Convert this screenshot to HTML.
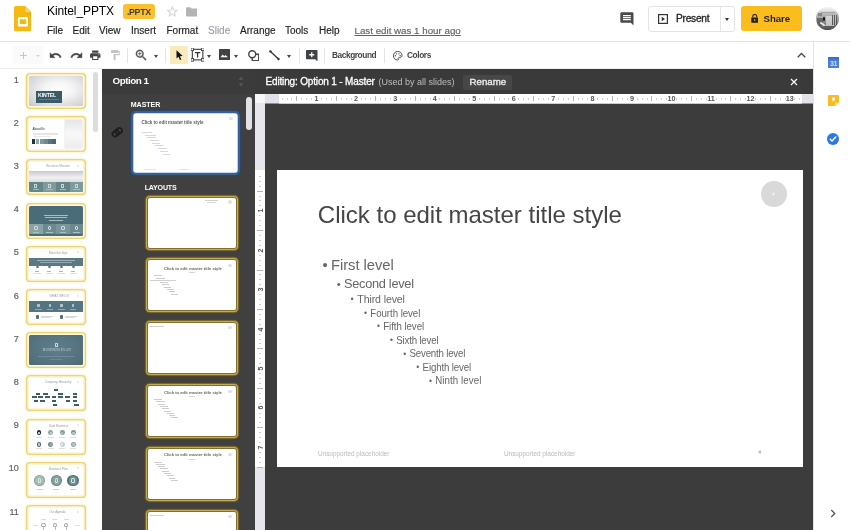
<!DOCTYPE html>
<html>
<head>
<meta charset="utf-8">
<title>Kintel_PPTX - Google Slides</title>
<style>
*{box-sizing:border-box;margin:0;padding:0}
html,body{width:850px;height:530px;overflow:hidden;background:#fff}
body{font-family:"Liberation Sans",sans-serif;position:relative;color:#202124}
.abs{position:absolute}
.t{position:absolute;white-space:nowrap;line-height:1}
.m{-webkit-text-stroke:.3px currentColor}
#menu .t{font-size:10px;top:25.5px;color:#202124;-webkit-text-stroke:.15px currentColor}
#toolbar{position:absolute;left:0;top:41px;width:813.3px;height:28px;border-top:1px solid #e3e3e3;border-bottom:1px solid #efefef;background:#fff}
.sep{position:absolute;top:48px;width:1px;height:15px;background:#e2e3e5}
.dd{position:absolute;width:0;height:0;margin-left:.4px;border-left:2.9px solid transparent;border-right:2.9px solid transparent;border-top:3.1px solid #444}
#film{position:absolute;left:0;top:69px;width:102px;height:461px;background:#fff;overflow:hidden}
.num{position:absolute;width:18.8px;text-align:right;left:0;font-size:9px;color:#5f6368;line-height:1;margin-top:1px;-webkit-text-stroke:.2px #5f6368}
.th{position:absolute;left:29px;width:54px;height:30px;background:#fff;border-radius:1.5px;
 box-shadow:0 0 0 1.7px #fdf6d8,0 0 0 3.1px #e9d37c,0 0 0 4.4px #fdf8e0;overflow:hidden}
.th>*{position:absolute}
#lay{position:absolute;left:102px;top:69px;width:153px;height:461px;background:#404040;overflow:hidden}
#layhead{position:absolute;left:0;top:0;width:153px;height:25px;background:#3b3b3b}
.lth{position:absolute;left:45.5px;width:88.5px;height:50px;background:#fff;border-radius:2px;
 box-shadow:0 0 0 1px #86712c,0 0 0 2px #c4aa50,0 0 0 3px #7a6728,0 0 0 3.5px #564a25;overflow:hidden}
.lth>*,.mth>*{position:absolute}
#main{position:absolute;left:255px;top:69px;width:558.3px;height:461px;background:#3c3c3c;overflow:hidden}
#slide{position:absolute;left:22px;top:101.3px;width:525.5px;height:296.9px;background:#fff}
#side{position:absolute;left:813.3px;top:41px;width:36.5px;height:489px;background:#fff;border-left:1px solid #e3e3e3;border-top:1px solid #e3e3e3}
</style>
</head>
<body>
<div id="root" style="position:absolute;left:0;top:0;width:850px;height:530px;will-change:transform;transform:translateZ(0)">
<!-- ===== TOP BAR ===== -->
<div id="top">
 <svg class="abs" style="left:13.6px;top:6.3px" width="17.8" height="25.3" viewBox="0 0 17.8 25.3">
  <path d="M1.8 0h9.5l6.5 6.5v17a1.8 1.8 0 0 1-1.8 1.8H1.8A1.8 1.8 0 0 1 0 23.5V1.8A1.8 1.8 0 0 1 1.8 0z" fill="#f4b912"/>
  <path d="M11.3 0l6.5 6.5h-4.7a1.8 1.8 0 0 1-1.8-1.8z" fill="#f8d364"/>
  <path d="M11.8 6.3l6 3.6V6.5z" fill="#dda40e" opacity=".45"/>
  <rect x="3.9" y="10.9" width="10.1" height="9.7" rx=".8" fill="#fff"/>
  <rect x="5.7" y="13.3" width="6.6" height="4.7" fill="#f4b912"/>
 </svg>
 <div class="t" style="left:47px;top:4.5px;font-size:12px;color:#000;letter-spacing:-.1px">Kintel_PPTX</div>
 <div class="abs" style="left:123px;top:4.3px;width:31.8px;height:14.6px;border-radius:3px;background:#fbc02d"></div>
 <div class="t" style="left:127px;top:7.6px;font-size:8.8px;font-weight:700;color:#3c3c3c;letter-spacing:-.35px">.PPTX</div>
 <svg class="abs" style="left:166px;top:5px" width="12.6" height="12.6" viewBox="0 0 24 24"><path d="M12 3.5l2.6 6 6.4.6-4.9 4.2 1.5 6.3L12 17.2 6.4 20.6l1.5-6.3L3 10.1l6.4-.6z" fill="none" stroke="#d6d6d6" stroke-width="2"/></svg>
 <svg class="abs" style="left:186px;top:7px" width="11.2" height="9.6" viewBox="0 0 24 20"><path d="M2 0h7l3 3h10a2 2 0 0 1 2 2v13a2 2 0 0 1-2 2H2a2 2 0 0 1-2-2V2a2 2 0 0 1 2-2z" fill="#b4b4b4"/></svg>
 <div id="menu">
  <div class="t" style="left:47px">File</div>
  <div class="t" style="left:72.5px">Edit</div>
  <div class="t" style="left:99px">View</div>
  <div class="t" style="left:131px">Insert</div>
  <div class="t" style="left:166.5px">Format</div>
  <div class="t" style="left:208px;color:#9aa0a6">Slide</div>
  <div class="t" style="left:240px">Arrange</div>
  <div class="t" style="left:285px">Tools</div>
  <div class="t" style="left:319px">Help</div>
  <div class="t" style="left:354.5px;color:#5f6368;font-size:9.75px;text-decoration:underline;text-underline-offset:1px">Last edit was 1 hour ago</div>
 </div>
 <!-- comment icon -->
 <svg class="abs" style="left:618.9px;top:10.5px" width="15.8" height="15.8" viewBox="0 0 24 24"><path d="M21.99 4c0-1.1-.89-2-1.99-2H4c-1.1 0-2 .9-2 2v12c0 1.1.9 2 2 2h14l4 4-.010-18zM18 14H6v-2h12v2zm0-3H6V9h12v2zm0-3H6V6h12v2z" fill="#4a4a4a"/></svg>
 <!-- present -->
 <div class="abs" style="left:648px;top:6px;width:87px;height:25.5px;border:1px solid #e2e3e5;border-radius:3px;background:#fff"></div>
 <div class="abs" style="left:720px;top:6.5px;width:1px;height:24.5px;background:#e6e6e6"></div>
 <svg class="abs" style="left:657.5px;top:13.8px" width="10" height="10" viewBox="0 0 20 20"><rect x="1.2" y="1.2" width="17.6" height="17.6" fill="none" stroke="#333" stroke-width="2.4"/><path d="M7.5 5.5l6.5 4.5-6.5 4.5z" fill="#333"/></svg>
 <div class="t" style="left:676px;top:13.8px;font-size:10.2px;color:#202124;-webkit-text-stroke:.3px #202124;letter-spacing:-.25px">Present</div>
 <div class="dd" style="left:724.5px;top:17.5px;border-top-color:#333"></div>
 <!-- share -->
 <div class="abs" style="left:741px;top:6.3px;width:61px;height:25px;border-radius:3px;background:#fbbc1e"></div>
 <svg class="abs" style="left:750.5px;top:13.5px" width="7.5" height="9" viewBox="0 0 15 18"><path d="M3.5 7V5a4 4 0 0 1 8 0v2" fill="none" stroke="#222" stroke-width="2.2"/><rect x="0.5" y="7" width="14" height="10.5" rx="1.5" fill="#222"/><circle cx="7.5" cy="12.2" r="1.6" fill="#fbbc1e"/></svg>
 <div class="t" style="left:763.5px;top:14px;font-size:9.6px;font-weight:700;color:#222">Share</div>
 <!-- avatar -->
 <div class="abs" style="left:815.5px;top:7.3px;width:23px;height:23px;border-radius:50%;overflow:hidden;background:linear-gradient(180deg,#f4f4f4 0,#e2e2e2 16%,#b8b8b8 30%,#a2a2a2 52%,#787878 76%,#4a4a4a 100%)">
   <div class="abs" style="left:2px;top:6px;width:4px;height:3px;background:#8a8a8a"></div>
   <div class="abs" style="left:1px;top:11px;width:6px;height:8px;background:#5a5a5a;opacity:.8"></div>
   <div class="abs" style="left:7.2px;top:9.6px;width:2.8px;height:4.6px;background:#1c1c1c;border-radius:1px"></div>
   <div class="abs" style="left:10.5px;top:8.5px;width:5.5px;height:9px;background:#e0e0e0;opacity:.75"></div>
   <div class="abs" style="left:16.5px;top:7.5px;width:5px;height:10px;background:repeating-linear-gradient(90deg,#4c4c4c 0 1px,#c8c8c8 1px 2.2px);opacity:.85"></div>
   <div class="abs" style="left:5px;top:4.5px;width:14px;height:1.2px;background:#9a9a9a;opacity:.8"></div>
   <div class="abs" style="left:8px;top:17.5px;width:10px;height:3px;background:repeating-linear-gradient(180deg,#d0d0d0 0 .8px,#5a5a5a .8px 1.6px);opacity:.8"></div>
   <div class="abs" style="left:4px;top:16px;width:5px;height:1.5px;background:#e8e8e8;transform:rotate(35deg)"></div>
 </div>
</div>


<!-- ===== TOOLBAR ===== -->
<div id="toolbar"></div>
<div id="tbicons">
 <div class="abs" style="left:13px;top:46px;width:30px;height:18px;background:#fafafa;border-radius:2px"></div>
 <div class="abs" style="left:19.5px;top:54.6px;width:7.5px;height:1.2px;background:#c6c6c6"></div>
 <div class="abs" style="left:22.65px;top:51.5px;width:1.2px;height:7.5px;background:#c6c6c6"></div>
 <div class="dd" style="left:36px;top:54.5px;border-left-width:2px;border-right-width:2px;border-top:2.5px solid #cfcfcf"></div>
 <!-- undo -->
 <svg class="abs" style="left:49px;top:48.6px" width="13" height="13" viewBox="0 0 24 24"><path stroke="#444" stroke-width=".9" d="M12.5 8c-2.65 0-5.05.99-6.9 2.6L2 7v9h9l-3.62-3.62c1.39-1.16 3.16-1.88 5.12-1.88 3.54 0 6.55 2.31 7.6 5.5l2.37-.78C21.08 11.03 17.15 8 12.5 8z" fill="#444"/></svg>
 <!-- redo -->
 <svg class="abs" style="left:69.5px;top:48.6px" width="13" height="13" viewBox="0 0 24 24"><path stroke="#444" stroke-width=".9" d="M18.4 10.6C16.55 8.99 14.15 8 11.5 8c-4.65 0-8.58 3.03-9.96 7.22L3.9 16c1.05-3.19 4.05-5.5 7.6-5.5 1.95 0 3.73.72 5.12 1.88L13 16h9V7l-3.6 3.6z" fill="#444"/></svg>
 <!-- print -->
 <svg class="abs" style="left:88.5px;top:49px" width="12.5" height="12.5" viewBox="0 0 24 24"><path d="M19 8H5c-1.66 0-3 1.34-3 3v6h4v4h12v-4h4v-6c0-1.66-1.34-3-3-3zm-3 11H8v-5h8v5zm3-7c-.55 0-1-.45-1-1s.45-1 1-1 1 .45 1 1-.45 1-1 1zm-1-9H6v4h12V3z" fill="#444"/></svg>
 <!-- paint format (disabled) -->
 <svg class="abs" style="left:108.5px;top:48.7px" width="12.3" height="12.3" viewBox="0 0 24 24"><path d="M18 4V3c0-.55-.45-1-1-1H5c-.55 0-1 .45-1 1v4c0 .55.45 1 1 1h12c.55 0 1-.45 1-1V6h1v4H9v11c0 .55.45 1 1 1h2c.55 0 1-.45 1-1v-9h8V4h-3z" fill="#c4c4c4"/></svg>
 <div class="sep" style="left:127px"></div>
 <!-- zoom -->
 <svg class="abs" style="left:134px;top:48.1px" width="14.5" height="14.5" viewBox="0 0 24 24"><path stroke="#555" stroke-width=".5" d="M15.5 14h-.79l-.28-.27C15.41 12.59 16 11.11 16 9.5 16 5.91 13.09 3 9.5 3S3 5.91 3 9.5 5.91 16 9.5 16c1.61 0 3.09-.59 4.23-1.57l.27.28v.79l5 4.99L20.49 19l-4.99-5zm-6 0C7.01 14 5 11.99 5 9.5S7.01 5 9.5 5 14 7.01 14 9.5 11.99 14 9.5 14zm.5-7H9v2H7v1h2v2h1v-2h2V9h-2V7z" fill="#555"/></svg>
 <div class="dd" style="left:153.5px;top:54.5px"></div>
 <div class="sep" style="left:165px"></div>
 <!-- select -->
 <div class="abs" style="left:170px;top:46.4px;width:17.6px;height:17.8px;background:#fbeabc;border-radius:1px"></div>
 <svg class="abs" style="left:175.5px;top:50.3px" width="7.5" height="10.5" viewBox="0 0 15 21"><path d="M1 0.5l0 16.5 4-3.6 2.9 6.8 2.8-1.2-2.9-6.7 5.7-.3z" fill="#111"/></svg>
 <!-- textbox -->
 <svg class="abs" style="left:191.2px;top:48.4px" width="13.2" height="13.2" viewBox="0 0 25 25"><rect x="2.5" y="2.5" width="20" height="20" fill="none" stroke="#333" stroke-width="2"/><rect x="0" y="0" width="5" height="5" fill="#fff" stroke="#333" stroke-width="1.4"/><rect x="20" y="0" width="5" height="5" fill="#fff" stroke="#333" stroke-width="1.4"/><rect x="0" y="20" width="5" height="5" fill="#fff" stroke="#333" stroke-width="1.4"/><rect x="20" y="20" width="5" height="5" fill="#fff" stroke="#333" stroke-width="1.4"/><path d="M7.5 7.5h10v2.4h-3.8v8h-2.4v-8H7.5z" fill="#333"/></svg>
 <div class="dd" style="left:207px;top:54.5px"></div>
 <!-- image -->
 <svg class="abs" style="left:219.2px;top:49.2px" width="11" height="11" viewBox="0 0 22 22"><rect width="22" height="22" rx="1" fill="#3f4346"/><path d="M3 16.5l4.5-5.5 3 3.6 2.2-2.6 5.3 4.5z" fill="#fff"/></svg>
 <div class="dd" style="left:234px;top:54.5px"></div>
 <!-- shape -->
 <svg class="abs" style="left:247.5px;top:49.5px" width="11.5" height="11.5" viewBox="0 0 23 23"><path d="M14 8.5h7.5v13h-13v-6" fill="none" stroke="#444" stroke-width="2.8"/><circle cx="8.5" cy="8.5" r="7" fill="#fff" stroke="#444" stroke-width="2.8"/></svg>
 <!-- line -->
 <svg class="abs" style="left:268.5px;top:50px" width="11" height="10.5" viewBox="0 0 22 21"><path d="M2.5 2.5L19 18" stroke="#333" stroke-width="2.6"/><circle cx="2.8" cy="2.8" r="2.4" fill="#333"/><circle cx="19" cy="18" r="2.4" fill="#333"/></svg>
 <div class="dd" style="left:286.7px;top:54.5px"></div>
 <div class="sep" style="left:298.5px"></div>
 <!-- add comment -->
 <svg class="abs" style="left:306px;top:49.5px" width="11.5" height="11.5" viewBox="0 0 23 23"><path d="M1.5 0h20a1.5 1.5 0 0 1 1.5 1.5V23l-4.5-4.5h-17A1.5 1.5 0 0 1 0 17V1.5A1.5 1.5 0 0 1 1.5 0z" fill="#3f4346"/><path d="M10.2 4.5h2.6v3.7h3.7v2.6h-3.7v3.7h-2.6v-3.7H6.5V8.2h3.7z" fill="#fff"/></svg>
 <div class="sep" style="left:324px"></div>
 <div class="t" style="left:332px;top:51.2px;font-size:8.3px;font-weight:700;color:#444;letter-spacing:-.42px">Background</div>
 <div class="sep" style="left:383.5px"></div>
 <!-- palette -->
 <svg class="abs" style="left:391.5px;top:49.5px" width="11.5" height="11.5" viewBox="0 0 24 24"><path d="M12 3a9 9 0 0 0 0 18c.83 0 1.5-.67 1.5-1.5 0-.39-.15-.74-.39-1.01-.23-.26-.38-.61-.38-.99 0-.83.67-1.5 1.5-1.5H16c2.76 0 5-2.24 5-5 0-4.42-4.03-8-9-8z" fill="none" stroke="#444" stroke-width="2"/><circle cx="7" cy="12" r="1.4" fill="#444"/><circle cx="9.5" cy="8" r="1.4" fill="#444"/><circle cx="14.5" cy="8" r="1.4" fill="#444"/><circle cx="17" cy="12" r="1.4" fill="#444"/></svg>
 <div class="t" style="left:407px;top:51.2px;font-size:8.3px;font-weight:700;color:#444;letter-spacing:-.4px">Colors</div>
 <!-- collapse caret -->
 <svg class="abs" style="left:796.5px;top:51.5px" width="9" height="6" viewBox="0 0 18 12"><path d="M1.5 10.5L9 3l7.5 7.5" fill="none" stroke="#444" stroke-width="2.6"/></svg>
</div>

<!-- ===== FILMSTRIP ===== -->
<div id="film">
<div class="num" style="top:5.5px">1</div>
<div class="th" style="top:7px"><div style="inset:0;background:radial-gradient(ellipse at 55% 45%,#fff 0,#f4f4f5 35%,#d2d2d6 85%,#c4c4c8 100%)"></div><div style="left:6.5px;top:14.5px;width:26.5px;height:12.5px;background:#3a5a68"></div><div class="t" style="left:9px;top:17px;font-size:5.2px;font-weight:700;color:#fff;letter-spacing:-.1px">KINTEL</div><div style="left:9.5px;top:23px;width:20px;height:.8px;background:#5f7c86"></div></div>
<div class="num" style="top:48.7px">2</div>
<div class="th" style="top:50.2px"><div style="left:36.3px;top:1px;width:17px;height:28px;background:linear-gradient(180deg,#e6e6e8,#f8f8f9 50%,#ececee);box-shadow:0 0 0 .5px #e6e6e6"></div><div class="t" style="left:3.5px;top:9px;font-size:2.8px;font-weight:700;color:#4a5a62">About Us</div><div style="left:3.5px;top:13.6px;width:25px;height:.6px;background:#e4e4e4"></div><div style="left:3.5px;top:15px;width:25px;height:.6px;background:#e6e6e6"></div><div style="left:3.5px;top:16.4px;width:18px;height:.6px;background:#e8e8e8"></div><div style="left:2.8px;top:20.3px;width:3.7px;height:4.2px;background:#24343b"></div><div style="left:6.8px;top:20.3px;width:3.7px;height:4.2px;background:#93aaa9"></div><div style="left:10.9px;top:20.3px;width:3.7px;height:4.2px;background:#7f9a9c"></div><div style="left:14.9px;top:20.3px;width:3.7px;height:4.2px;background:#6d8a90"></div><div style="left:19px;top:20.3px;width:3.7px;height:4.2px;background:#55767f"></div><div style="left:23.1px;top:20.3px;width:3.7px;height:4.2px;background:#486a76"></div></div>
<div class="num" style="top:91.9px">3</div>
<div class="th" style="top:93.4px"><div class="t" style="left:17.5px;top:3px;font-size:3px;color:#9a9a9a">Business Mission</div><div style="left:48px;top:2.5px;width:2px;height:2px;border-radius:50%;background:#e2e2e2"></div><div style="left:0;top:8.5px;width:54px;height:11.5px;background:linear-gradient(180deg,#c9c9cb,#f1f1f2 60%,#dcdcde)"></div><div style="left:0;top:19.5px;width:54px;height:10.5px;background:#668589"></div><div style="left:13.5px;top:19.5px;width:13.5px;height:10.5px;background:#7e9a9c"></div><div style="left:40.5px;top:19.5px;width:13.5px;height:10.5px;background:#7e9a9c"></div><div style="left:5.2px;top:21.5px;width:3px;height:4px;border:.7px solid #c9d6d6"></div><div style="left:3.5px;top:27px;width:6.5px;height:.6px;background:#a9bcbc"></div><div style="left:18.7px;top:21.5px;width:3px;height:4px;border:.7px solid #c9d6d6"></div><div style="left:17px;top:27px;width:6.5px;height:.6px;background:#a9bcbc"></div><div style="left:32.2px;top:21.5px;width:3px;height:4px;border:.7px solid #c9d6d6"></div><div style="left:30.5px;top:27px;width:6.5px;height:.6px;background:#a9bcbc"></div><div style="left:45.7px;top:21.5px;width:3px;height:4px;border:.7px solid #c9d6d6"></div><div style="left:44px;top:27px;width:6.5px;height:.6px;background:#a9bcbc"></div></div>
<div class="num" style="top:135.1px">4</div>
<div class="th" style="top:136.6px"><div style="inset:0;background:#4a6b78"></div><div style="left:15px;top:9px;width:24px;height:1px;background:#a9bcc3"></div><div style="left:16px;top:11.5px;width:22px;height:1px;background:#a9bcc3"></div><div style="left:20px;top:14px;width:14px;height:1px;background:#a9bcc3"></div><div style="left:0;top:18px;width:54px;height:10px;background:#6b8990"></div><div style="left:0;top:18px;width:13.5px;height:10px;background:#89a2a4"></div><div style="left:27px;top:18px;width:13.5px;height:10px;background:#7a969b"></div><div style="left:5px;top:20px;width:3.5px;height:4px;border:.7px solid #cfdbdb;border-radius:1px"></div><div style="left:3.5px;top:26px;width:6.5px;height:.6px;background:#aebfc0"></div><div style="left:18.5px;top:20px;width:3.5px;height:4px;border:.7px solid #cfdbdb;border-radius:1px"></div><div style="left:17px;top:26px;width:6.5px;height:.6px;background:#aebfc0"></div><div style="left:32px;top:20px;width:3.5px;height:4px;border:.7px solid #cfdbdb;border-radius:1px"></div><div style="left:30.5px;top:26px;width:6.5px;height:.6px;background:#aebfc0"></div><div style="left:45.5px;top:20px;width:3.5px;height:4px;border:.7px solid #cfdbdb;border-radius:1px"></div><div style="left:44px;top:26px;width:6.5px;height:.6px;background:#aebfc0"></div></div>
<div class="num" style="top:178.3px">5</div>
<div class="th" style="top:179.8px"><div class="t" style="left:20px;top:3px;font-size:3px;color:#9a9a9a">Meet the Sign</div><div style="left:48px;top:2.5px;width:2px;height:2px;border-radius:50%;background:#e2e2e2"></div><div style="left:0;top:9.5px;width:54px;height:8px;background:#5a7985"></div><div style="left:8px;top:11.5px;width:38px;height:.8px;background:#9fb2b9"></div><div style="left:11px;top:13.5px;width:32px;height:.8px;background:#93a8af"></div><div style="left:6.5px;top:17px;width:3px;height:2.5px;border-radius:50%;background:#5d7b86"></div><div style="left:6px;top:22px;width:4px;height:1.2px;background:#a9b8bd"></div><div style="left:4.5px;top:24.5px;width:7px;height:.6px;background:#dcdfe0"></div><div style="left:18.5px;top:17px;width:3px;height:2.5px;border-radius:50%;background:#5d7b86"></div><div style="left:18px;top:22px;width:4px;height:1.2px;background:#a9b8bd"></div><div style="left:16.5px;top:24.5px;width:7px;height:.6px;background:#dcdfe0"></div><div style="left:30.5px;top:17px;width:3px;height:2.5px;border-radius:50%;background:#5d7b86"></div><div style="left:30px;top:22px;width:4px;height:1.2px;background:#a9b8bd"></div><div style="left:28.5px;top:24.5px;width:7px;height:.6px;background:#dcdfe0"></div><div style="left:42.5px;top:17px;width:3px;height:2.5px;border-radius:50%;background:#5d7b86"></div><div style="left:42px;top:22px;width:4px;height:1.2px;background:#a9b8bd"></div><div style="left:40.5px;top:24.5px;width:7px;height:.6px;background:#dcdfe0"></div></div>
<div class="num" style="top:221.5px">6</div>
<div class="th" style="top:223px"><div class="t" style="left:20.5px;top:3px;font-size:3px;color:#9a9a9a">WHAT WE DO</div><div style="left:48px;top:2.5px;width:2px;height:2px;border-radius:50%;background:#e2e2e2"></div><div style="left:0;top:8.6px;width:54px;height:11.4px;background:#567582"></div><div style="left:8px;top:12px;width:2.5px;height:2.5px;background:#b7c6ca;border-radius:30%"></div><div style="left:6px;top:16.5px;width:6.5px;height:.7px;background:#93a8af"></div><div style="left:19.5px;top:12px;width:2.5px;height:2.5px;background:#b7c6ca;border-radius:30%"></div><div style="left:17.5px;top:16.5px;width:6.5px;height:.7px;background:#93a8af"></div><div style="left:31px;top:12px;width:2.5px;height:2.5px;background:#b7c6ca;border-radius:30%"></div><div style="left:29px;top:16.5px;width:6.5px;height:.7px;background:#93a8af"></div><div style="left:42.5px;top:12px;width:2.5px;height:2.5px;background:#b7c6ca;border-radius:30%"></div><div style="left:40.5px;top:16.5px;width:6.5px;height:.7px;background:#93a8af"></div><div style="left:7px;top:22.5px;width:3px;height:4px;background:#5a6e76;border-radius:1px"></div><div style="left:12px;top:23.5px;width:12px;height:.6px;background:#d6d6d6"></div><div style="left:12px;top:25px;width:10px;height:.6px;background:#dedede"></div><div style="left:31px;top:22.5px;width:3px;height:4px;background:#5a6e76;border-radius:1px"></div><div style="left:36px;top:23.5px;width:12px;height:.6px;background:#d6d6d6"></div><div style="left:36px;top:25px;width:10px;height:.6px;background:#dedede"></div></div>
<div class="num" style="top:264.7px">7</div>
<div class="th" style="top:266.2px"><div style="inset:0;background:radial-gradient(ellipse at 50% 45%,#5f7e89 0,#557480 60%,#4c6a76 100%)"></div><div style="left:25.5px;top:7.5px;width:3px;height:4px;border:.8px solid #cbd7da;border-radius:.5px"></div><div class="t" style="left:13.5px;top:13px;font-size:4.3px;color:#c3d0d4;font-family:'Liberation Serif',serif;letter-spacing:.1px">B<span style="font-size:3.4px">USINESS</span> P<span style="font-size:3.4px">LAN</span></div><div style="left:9px;top:21px;width:36px;height:.6px;background:#6f8c96"></div><div style="left:21px;top:24px;width:12px;height:.6px;background:#6b8791"></div></div>
<div class="num" style="top:307.9px">8</div>
<div class="th" style="top:309.4px"><div class="t" style="left:16px;top:3px;font-size:3px;color:#9a9a9a">Company Hierarchy</div><div style="left:48px;top:2.5px;width:2px;height:2px;border-radius:50%;background:#e2e2e2"></div><div style="left:24.9px;top:10.5px;width:4.6px;height:2.1px;background:#4f7073;box-shadow:inset 0 0 0 .5px #35545a"></div><div style="left:6.6px;top:14.7px;width:4.6px;height:2.1px;background:#4f7073;box-shadow:inset 0 0 0 .5px #35545a"></div><div style="left:14.4px;top:14.7px;width:4.6px;height:2.1px;background:#4f7073;box-shadow:inset 0 0 0 .5px #35545a"></div><div style="left:29.4px;top:14.7px;width:4.6px;height:2.1px;background:#4f7073;box-shadow:inset 0 0 0 .5px #35545a"></div><div style="left:43.5px;top:14.7px;width:4.6px;height:2.1px;background:#4f7073;box-shadow:inset 0 0 0 .5px #35545a"></div><div style="left:3.3px;top:18px;width:4.6px;height:2.1px;background:#4f7073;box-shadow:inset 0 0 0 .5px #35545a"></div><div style="left:9.4px;top:18px;width:4.6px;height:2.1px;background:#4f7073;box-shadow:inset 0 0 0 .5px #35545a"></div><div style="left:16.1px;top:18px;width:4.6px;height:2.1px;background:#4f7073;box-shadow:inset 0 0 0 .5px #35545a"></div><div style="left:22.7px;top:18px;width:4.6px;height:2.1px;background:#4f7073;box-shadow:inset 0 0 0 .5px #35545a"></div><div style="left:29.4px;top:18px;width:4.6px;height:2.1px;background:#4f7073;box-shadow:inset 0 0 0 .5px #35545a"></div><div style="left:36px;top:18px;width:4.6px;height:2.1px;background:#4f7073;box-shadow:inset 0 0 0 .5px #35545a"></div><div style="left:43.5px;top:18px;width:4.6px;height:2.1px;background:#4f7073;box-shadow:inset 0 0 0 .5px #35545a"></div><div style="left:4.5px;top:21.8px;width:4.6px;height:2.1px;background:#4f7073;box-shadow:inset 0 0 0 .5px #35545a"></div><div style="left:11.1px;top:21.8px;width:4.6px;height:2.1px;background:#4f7073;box-shadow:inset 0 0 0 .5px #35545a"></div><div style="left:22.7px;top:21.8px;width:4.6px;height:2.1px;background:#4f7073;box-shadow:inset 0 0 0 .5px #35545a"></div><div style="left:36.8px;top:21.8px;width:4.6px;height:2.1px;background:#4f7073;box-shadow:inset 0 0 0 .5px #35545a"></div><div style="left:43.5px;top:21.8px;width:4.6px;height:2.1px;background:#4f7073;box-shadow:inset 0 0 0 .5px #35545a"></div><div style="left:23.9px;top:25.5px;width:4.6px;height:2.1px;background:#4f7073;box-shadow:inset 0 0 0 .5px #35545a"></div><div style="left:45.1px;top:25.5px;width:4.6px;height:2.1px;background:#4f7073;box-shadow:inset 0 0 0 .5px #35545a"></div></div>
<div class="num" style="top:351.1px">9</div>
<div class="th" style="top:352.6px"><div class="t" style="left:20px;top:3px;font-size:3px;color:#9a9a9a">Kate Business</div><div style="left:48px;top:2.5px;width:2px;height:2px;border-radius:50%;background:#e2e2e2"></div><div style="left:7.7px;top:8.8px;width:4.8px;height:4.8px;border-radius:50%;background:#1f2c33"></div><div style="left:9.3px;top:10.4px;width:1.6px;height:1.6px;border-radius:50%;background:#dfe6e8"></div><div style="left:19.3px;top:8.8px;width:4.8px;height:4.8px;border-radius:50%;background:#93a8a6"></div><div style="left:20.5px;top:10px;width:2.4px;height:2.4px;border-radius:50%;background:#c8d3d1"></div><div style="left:30.9px;top:8.8px;width:4.8px;height:4.8px;border-radius:50%;background:#8aa09f"></div><div style="left:32.1px;top:10px;width:2.4px;height:2.4px;border-radius:50%;background:#b8c6c4"></div><div style="left:42px;top:8.8px;width:4.8px;height:4.8px;border-radius:50%;background:#7b9497"></div><div style="left:43.2px;top:10px;width:2.4px;height:2.4px;border-radius:50%;background:#c3cfce"></div><div style="left:7.7px;top:20.6px;width:4.8px;height:4.8px;border-radius:50%;background:#4d666f"></div><div style="left:8.9px;top:21.8px;width:2.4px;height:2.4px;border-radius:50%;background:#c5d0d2"></div><div style="left:19.3px;top:20.6px;width:4.8px;height:4.8px;border-radius:50%;background:#6f8a8e"></div><div style="left:20.6px;top:21.9px;width:2.2px;height:2.2px;border-radius:50%;background:#9eb1b2"></div><div style="left:30.9px;top:20.6px;width:4.8px;height:4.8px;border-radius:50%;background:#c3cdcc"></div><div style="left:32.1px;top:21.8px;width:2.4px;height:2.4px;border-radius:50%;background:#e6ebea"></div><div style="left:42px;top:20.6px;width:4.8px;height:4.8px;border-radius:50%;background:#869d9f"></div><div style="left:43.2px;top:21.8px;width:2.4px;height:2.4px;border-radius:50%;background:#b7c5c5"></div><div style="left:7.1px;top:15px;width:6px;height:.5px;background:#dedede"></div><div style="left:7.1px;top:26.8px;width:6px;height:.5px;background:#dedede"></div><div style="left:18.7px;top:15px;width:6px;height:.5px;background:#dedede"></div><div style="left:18.7px;top:26.8px;width:6px;height:.5px;background:#dedede"></div><div style="left:30.299999999999997px;top:15px;width:6px;height:.5px;background:#dedede"></div><div style="left:30.299999999999997px;top:26.8px;width:6px;height:.5px;background:#dedede"></div><div style="left:41.4px;top:15px;width:6px;height:.5px;background:#dedede"></div><div style="left:41.4px;top:26.8px;width:6px;height:.5px;background:#dedede"></div></div>
<div class="num" style="top:394.3px">10</div>
<div class="th" style="top:395.8px"><div class="t" style="left:20px;top:3px;font-size:3px;color:#9a9a9a">Business Plan</div><div style="left:48px;top:2.5px;width:2px;height:2px;border-radius:50%;background:#e2e2e2"></div><div style="left:4.9px;top:10.3px;width:11.2px;height:11.2px;border-radius:50%;background:#83a097"></div><div style="left:6.2px;top:11.6px;width:8.6px;height:8.6px;border-radius:50%;background:#a9bdb5"></div><div style="left:21.7px;top:10.3px;width:11.2px;height:11.2px;border-radius:50%;background:#638585"></div><div style="left:23px;top:11.6px;width:8.6px;height:8.6px;border-radius:50%;background:#86a2a0"></div><div style="left:38.4px;top:10.3px;width:11.2px;height:11.2px;border-radius:50%;background:#4f7478"></div><div style="left:39.7px;top:11.6px;width:8.6px;height:8.6px;border-radius:50%;background:#6f9195"></div><div style="left:8.9px;top:13.5px;width:3.2px;height:4.4px;border:.7px solid #d9e3e0;border-radius:45% 45% 30% 30%"></div><div style="left:25.7px;top:13.5px;width:3.2px;height:4.4px;border:.7px solid #d9e3e0;border-radius:45% 45% 30% 30%"></div><div style="left:42.4px;top:13.5px;width:3.2px;height:4.4px;border:.7px solid #d9e3e0;border-radius:45% 45% 30% 30%"></div><div style="left:7.5px;top:24.3px;width:6px;height:.5px;background:#d0d0d0"></div><div style="left:24.3px;top:24.3px;width:6px;height:.5px;background:#d0d0d0"></div><div style="left:41px;top:24.3px;width:6px;height:.5px;background:#d0d0d0"></div></div>
<div class="num" style="top:437.5px">11</div>
<div class="th" style="top:439px"><div class="t" style="left:20.5px;top:3px;font-size:3px;color:#9a9a9a">Our Agenda</div><div style="left:48px;top:2.5px;width:2px;height:2px;border-radius:50%;background:#e2e2e2"></div><div style="left:12px;top:11.4px;width:5px;height:.5px;background:#dadada"></div><div style="left:12.4px;top:14.6px;width:4.2px;height:4.6px;border:.6px solid #aaa;border-radius:50% 50% 35% 35%"></div><div style="left:14.2px;top:19px;width:.6px;height:3px;background:#bbb"></div><div style="left:23.4px;top:11.4px;width:5px;height:.5px;background:#dadada"></div><div style="left:23.799999999999997px;top:14.6px;width:4.2px;height:4.6px;border:.6px solid #aaa;border-radius:50% 50% 35% 35%"></div><div style="left:25.599999999999998px;top:19px;width:.6px;height:3px;background:#bbb"></div><div style="left:34.5px;top:11.4px;width:5px;height:.5px;background:#dadada"></div><div style="left:34.9px;top:14.6px;width:4.2px;height:4.6px;border:.6px solid #aaa;border-radius:50% 50% 35% 35%"></div><div style="left:36.7px;top:19px;width:.6px;height:3px;background:#bbb"></div><div style="left:3.5px;top:16.5px;width:5px;height:.5px;background:#e0e0e0"></div><div style="left:45.5px;top:16.5px;width:5px;height:.5px;background:#e0e0e0"></div></div>
<div class="abs" style="left:93.2px;top:3px;width:4.7px;height:59.5px;border-radius:2.5px;background:#dcdce0"></div>
</div>
<!-- ===== LAYOUT PANEL ===== -->
<div id="lay">
<div id="layhead"></div>
<div class="t" style="left:10.5px;top:7.2px;font-size:9.9px;font-weight:700;color:#fff;letter-spacing:-.5px">Option 1</div>
<svg class="abs" style="left:136px;top:7px" width="6" height="11" viewBox="0 0 12 22"><path d="M6 1.5L10.5 7.5h-9z M6 20.5L1.5 14.5h9z" fill="#5a5a5a"/></svg>
<div class="t" style="left:28.8px;top:32.6px;font-size:7.1px;font-weight:700;color:#fff;letter-spacing:-.1px">MASTER</div>
<div class="abs mth" style="left:31.5px;top:45px;width:103px;height:58px;background:#fff;border-radius:2px;box-shadow:0 0 0 .7px #fff,0 0 0 3px #35619a,0 0 0 3.7px #2a4870;overflow:hidden"><div class="t" style="left:8px;top:6.5px;font-size:4.6px;color:#5e5e5e;font-weight:700;letter-spacing:-.05px">Click to edit master title style</div><div style="left:95.5px;top:2.5px;width:3.5px;height:3.5px;border-radius:50%;background:#e2e2e2"></div><div style="left:8.5px;top:18px;width:10.1px;height:.7px;background:#d8d8d8"></div><div style="left:11.1px;top:20.7px;width:11.2px;height:.7px;background:#d8d8d8"></div><div style="left:13.7px;top:23.4px;width:9px;height:.7px;background:#d8d8d8"></div><div style="left:16.2px;top:26.1px;width:9px;height:.7px;background:#d8d8d8"></div><div style="left:18.8px;top:28.8px;width:7.8px;height:.7px;background:#d8d8d8"></div><div style="left:21.4px;top:31.4px;width:7.8px;height:.7px;background:#d8d8d8"></div><div style="left:24px;top:34.1px;width:9px;height:.7px;background:#d8d8d8"></div><div style="left:26.5px;top:36.8px;width:7.8px;height:.7px;background:#d8d8d8"></div><div style="left:29.1px;top:39.5px;width:7.8px;height:.7px;background:#d8d8d8"></div><div style="left:10px;top:54.5px;width:12px;height:.5px;background:#e6e6e6"></div><div style="left:44px;top:54.5px;width:12px;height:.5px;background:#e6e6e6"></div></div>
<svg class="abs" style="left:9.3px;top:56.8px" width="12.5" height="12.5" viewBox="0 0 22 22"><g transform="rotate(-38 11 11)" fill="none" stroke="#1c1c1c" stroke-width="3"><rect x="1.5" y="6.5" width="12" height="9" rx="4.5"/><rect x="8.5" y="6.5" width="12" height="9" rx="4.5"/></g></svg>
<div class="t" style="left:42.7px;top:115.5px;font-size:7.1px;font-weight:700;color:#fff;letter-spacing:-.2px">LAYOUTS</div>
<div class="lth" style="top:128.5px"><div style="left:57px;top:2.5px;width:13px;height:.7px;background:#d0d0d0"></div><div style="left:59px;top:4.5px;width:9px;height:.7px;background:#d8d8d8"></div><div style="left:80.5px;top:2.5px;width:3.5px;height:3.5px;border-radius:50%;background:#e2e2e2"></div></div>
<div class="lth" style="top:191.4px"><div class="t" style="left:16.5px;top:6.5px;font-size:4.2px;color:#666;font-weight:700">Click to edit master title style</div><div style="left:80.5px;top:3.5px;width:3.5px;height:3.5px;border-radius:50%;background:#e2e2e2"></div><div style="left:41px;top:12px;width:6px;height:.6px;background:#d4d4d4"></div><div style="left:6px;top:15px;width:8.5px;height:.7px;background:#cdcdcd"></div><div style="left:8.2px;top:17.3px;width:9.5px;height:.7px;background:#cdcdcd"></div><div style="left:10.4px;top:19.6px;width:7.6px;height:.7px;background:#cdcdcd"></div><div style="left:12.6px;top:21.8px;width:7.6px;height:.7px;background:#cdcdcd"></div><div style="left:14.7px;top:24.1px;width:6.6px;height:.7px;background:#cdcdcd"></div><div style="left:16.9px;top:26.4px;width:6.6px;height:.7px;background:#cdcdcd"></div><div style="left:19.1px;top:28.7px;width:7.6px;height:.7px;background:#cdcdcd"></div><div style="left:21.3px;top:31px;width:6.6px;height:.7px;background:#cdcdcd"></div><div style="left:23.5px;top:33.2px;width:6.6px;height:.7px;background:#cdcdcd"></div><div style="left:2px;top:19.5px;width:26px;height:.7px;background:#cfcfcf"></div></div>
<div class="lth" style="top:254.3px"><div style="left:2px;top:2.5px;width:14px;height:.6px;background:#d0d0d0"></div><div style="left:80.5px;top:2.5px;width:3.5px;height:3.5px;border-radius:50%;background:#e2e2e2"></div></div>
<div class="lth" style="top:317.2px"><div class="t" style="left:16.5px;top:4.5px;font-size:4.2px;color:#666;font-weight:700">Click to edit master title style</div><div style="left:80.5px;top:3.5px;width:3.5px;height:3.5px;border-radius:50%;background:#e2e2e2"></div><div style="left:41px;top:10px;width:6px;height:.6px;background:#d4d4d4"></div><div style="left:6px;top:13px;width:8.5px;height:.7px;background:#cdcdcd"></div><div style="left:8.2px;top:15.3px;width:9.5px;height:.7px;background:#cdcdcd"></div><div style="left:10.4px;top:17.6px;width:7.6px;height:.7px;background:#cdcdcd"></div><div style="left:12.6px;top:19.8px;width:7.6px;height:.7px;background:#cdcdcd"></div><div style="left:14.7px;top:22.1px;width:6.6px;height:.7px;background:#cdcdcd"></div><div style="left:16.9px;top:24.4px;width:6.6px;height:.7px;background:#cdcdcd"></div><div style="left:19.1px;top:26.7px;width:7.6px;height:.7px;background:#cdcdcd"></div><div style="left:21.3px;top:29px;width:6.6px;height:.7px;background:#cdcdcd"></div><div style="left:23.5px;top:31.2px;width:6.6px;height:.7px;background:#cdcdcd"></div></div>
<div class="lth" style="top:380.1px"><div class="t" style="left:16.5px;top:4px;font-size:4.2px;color:#666;font-weight:700">Click to edit master title style</div><div style="left:80.5px;top:3.5px;width:3.5px;height:3.5px;border-radius:50%;background:#e2e2e2"></div><div style="left:41px;top:9.5px;width:6px;height:.6px;background:#d4d4d4"></div><div style="left:6px;top:12.5px;width:8.5px;height:.7px;background:#cdcdcd"></div><div style="left:8.2px;top:14.8px;width:9.5px;height:.7px;background:#cdcdcd"></div><div style="left:10.4px;top:17.1px;width:7.6px;height:.7px;background:#cdcdcd"></div><div style="left:12.6px;top:19.3px;width:7.6px;height:.7px;background:#cdcdcd"></div><div style="left:14.7px;top:21.6px;width:6.6px;height:.7px;background:#cdcdcd"></div><div style="left:16.9px;top:23.9px;width:6.6px;height:.7px;background:#cdcdcd"></div><div style="left:19.1px;top:26.2px;width:7.6px;height:.7px;background:#cdcdcd"></div><div style="left:21.3px;top:28.5px;width:6.6px;height:.7px;background:#cdcdcd"></div><div style="left:23.5px;top:30.7px;width:6.6px;height:.7px;background:#cdcdcd"></div></div>
<div class="lth" style="top:443px"><div style="left:2px;top:2.5px;width:14px;height:.6px;background:#d0d0d0"></div><div style="left:80.5px;top:2.5px;width:3.5px;height:3.5px;border-radius:50%;background:#e2e2e2"></div></div>
<div class="abs" style="left:144px;top:27.5px;width:5.8px;height:33px;border-radius:3px;background:#e2e2e6"></div>
</div>
<!-- ===== MAIN ===== -->
<div id="main">
<div class="abs" style="left:0;top:0;width:559px;height:25px;background:#3a3a3a"></div>
<div class="t m" style="left:10.5px;top:7.7px;font-size:10px;color:#fff;letter-spacing:-.16px">Editing: Option 1 - Master</div>
<div class="t" style="left:123.5px;top:8.5px;font-size:9px;color:#bdbdbd">(Used by all slides)</div>
<div class="abs" style="left:208px;top:6px;width:49px;height:14.5px;background:#474747;border-radius:2px"></div>
<div class="t m" style="left:214.5px;top:8px;font-size:9.7px;color:#f1f1f1">Rename</div>
<svg class="abs" style="left:535px;top:9px" width="8" height="8" viewBox="0 0 16 16"><path d="M2 2l12 12M14 2L2 14" stroke="#fff" stroke-width="2.4"/></svg>
<div class="abs" style="left:0;top:25px;width:559px;height:9px;background:#e2e2e8"></div>
<div class="abs" style="left:0;top:25px;width:9.5px;height:9px;background:#f7f7f9"></div>
<div class="abs" style="left:24.3px;top:25px;width:522.7px;height:9px;background:#fff"></div>
<div class="abs" style="left:26.63px;top:28.6px;width:.7px;height:2px;background:#cdcdcd"></div><div class="abs" style="left:31.56px;top:28.6px;width:.7px;height:2px;background:#cdcdcd"></div><div class="abs" style="left:36.49px;top:28.6px;width:.7px;height:2px;background:#cdcdcd"></div><div class="abs" style="left:41.43px;top:26.7px;width:.7px;height:5.8px;background:#b4b4b4"></div><div class="abs" style="left:46.36px;top:28.6px;width:.7px;height:2px;background:#cdcdcd"></div><div class="abs" style="left:51.29px;top:28.6px;width:.7px;height:2px;background:#cdcdcd"></div><div class="abs" style="left:56.22px;top:28.6px;width:.7px;height:2px;background:#cdcdcd"></div><div class="t" style="left:51.45px;top:26.2px;width:20px;text-align:center;font-size:7.2px;font-weight:700;color:#555">1</div><div class="abs" style="left:66.08px;top:28.6px;width:.7px;height:2px;background:#cdcdcd"></div><div class="abs" style="left:71.01px;top:28.6px;width:.7px;height:2px;background:#cdcdcd"></div><div class="abs" style="left:75.94px;top:28.6px;width:.7px;height:2px;background:#cdcdcd"></div><div class="abs" style="left:80.88px;top:26.7px;width:.7px;height:5.8px;background:#b4b4b4"></div><div class="abs" style="left:85.81px;top:28.6px;width:.7px;height:2px;background:#cdcdcd"></div><div class="abs" style="left:90.74px;top:28.6px;width:.7px;height:2px;background:#cdcdcd"></div><div class="abs" style="left:95.67px;top:28.6px;width:.7px;height:2px;background:#cdcdcd"></div><div class="t" style="left:90.9px;top:26.2px;width:20px;text-align:center;font-size:7.2px;font-weight:700;color:#555">2</div><div class="abs" style="left:105.53px;top:28.6px;width:.7px;height:2px;background:#cdcdcd"></div><div class="abs" style="left:110.46px;top:28.6px;width:.7px;height:2px;background:#cdcdcd"></div><div class="abs" style="left:115.39px;top:28.6px;width:.7px;height:2px;background:#cdcdcd"></div><div class="abs" style="left:120.33px;top:26.7px;width:.7px;height:5.8px;background:#b4b4b4"></div><div class="abs" style="left:125.26px;top:28.6px;width:.7px;height:2px;background:#cdcdcd"></div><div class="abs" style="left:130.19px;top:28.6px;width:.7px;height:2px;background:#cdcdcd"></div><div class="abs" style="left:135.12px;top:28.6px;width:.7px;height:2px;background:#cdcdcd"></div><div class="t" style="left:130.35px;top:26.2px;width:20px;text-align:center;font-size:7.2px;font-weight:700;color:#555">3</div><div class="abs" style="left:144.98px;top:28.6px;width:.7px;height:2px;background:#cdcdcd"></div><div class="abs" style="left:149.91px;top:28.6px;width:.7px;height:2px;background:#cdcdcd"></div><div class="abs" style="left:154.84px;top:28.6px;width:.7px;height:2px;background:#cdcdcd"></div><div class="abs" style="left:159.78px;top:26.7px;width:.7px;height:5.8px;background:#b4b4b4"></div><div class="abs" style="left:164.71px;top:28.6px;width:.7px;height:2px;background:#cdcdcd"></div><div class="abs" style="left:169.64px;top:28.6px;width:.7px;height:2px;background:#cdcdcd"></div><div class="abs" style="left:174.57px;top:28.6px;width:.7px;height:2px;background:#cdcdcd"></div><div class="t" style="left:169.8px;top:26.2px;width:20px;text-align:center;font-size:7.2px;font-weight:700;color:#555">4</div><div class="abs" style="left:184.43px;top:28.6px;width:.7px;height:2px;background:#cdcdcd"></div><div class="abs" style="left:189.36px;top:28.6px;width:.7px;height:2px;background:#cdcdcd"></div><div class="abs" style="left:194.29px;top:28.6px;width:.7px;height:2px;background:#cdcdcd"></div><div class="abs" style="left:199.22px;top:26.7px;width:.7px;height:5.8px;background:#b4b4b4"></div><div class="abs" style="left:204.16px;top:28.6px;width:.7px;height:2px;background:#cdcdcd"></div><div class="abs" style="left:209.09px;top:28.6px;width:.7px;height:2px;background:#cdcdcd"></div><div class="abs" style="left:214.02px;top:28.6px;width:.7px;height:2px;background:#cdcdcd"></div><div class="t" style="left:209.25px;top:26.2px;width:20px;text-align:center;font-size:7.2px;font-weight:700;color:#555">5</div><div class="abs" style="left:223.88px;top:28.6px;width:.7px;height:2px;background:#cdcdcd"></div><div class="abs" style="left:228.81px;top:28.6px;width:.7px;height:2px;background:#cdcdcd"></div><div class="abs" style="left:233.74px;top:28.6px;width:.7px;height:2px;background:#cdcdcd"></div><div class="abs" style="left:238.68px;top:26.7px;width:.7px;height:5.8px;background:#b4b4b4"></div><div class="abs" style="left:243.61px;top:28.6px;width:.7px;height:2px;background:#cdcdcd"></div><div class="abs" style="left:248.54px;top:28.6px;width:.7px;height:2px;background:#cdcdcd"></div><div class="abs" style="left:253.47px;top:28.6px;width:.7px;height:2px;background:#cdcdcd"></div><div class="t" style="left:248.7px;top:26.2px;width:20px;text-align:center;font-size:7.2px;font-weight:700;color:#555">6</div><div class="abs" style="left:263.33px;top:28.6px;width:.7px;height:2px;background:#cdcdcd"></div><div class="abs" style="left:268.26px;top:28.6px;width:.7px;height:2px;background:#cdcdcd"></div><div class="abs" style="left:273.19px;top:28.6px;width:.7px;height:2px;background:#cdcdcd"></div><div class="abs" style="left:278.12px;top:26.7px;width:.7px;height:5.8px;background:#b4b4b4"></div><div class="abs" style="left:283.06px;top:28.6px;width:.7px;height:2px;background:#cdcdcd"></div><div class="abs" style="left:287.99px;top:28.6px;width:.7px;height:2px;background:#cdcdcd"></div><div class="abs" style="left:292.92px;top:28.6px;width:.7px;height:2px;background:#cdcdcd"></div><div class="t" style="left:288.15px;top:26.2px;width:20px;text-align:center;font-size:7.2px;font-weight:700;color:#555">7</div><div class="abs" style="left:302.78px;top:28.6px;width:.7px;height:2px;background:#cdcdcd"></div><div class="abs" style="left:307.71px;top:28.6px;width:.7px;height:2px;background:#cdcdcd"></div><div class="abs" style="left:312.64px;top:28.6px;width:.7px;height:2px;background:#cdcdcd"></div><div class="abs" style="left:317.57px;top:26.7px;width:.7px;height:5.8px;background:#b4b4b4"></div><div class="abs" style="left:322.51px;top:28.6px;width:.7px;height:2px;background:#cdcdcd"></div><div class="abs" style="left:327.44px;top:28.6px;width:.7px;height:2px;background:#cdcdcd"></div><div class="abs" style="left:332.37px;top:28.6px;width:.7px;height:2px;background:#cdcdcd"></div><div class="t" style="left:327.6px;top:26.2px;width:20px;text-align:center;font-size:7.2px;font-weight:700;color:#555">8</div><div class="abs" style="left:342.23px;top:28.6px;width:.7px;height:2px;background:#cdcdcd"></div><div class="abs" style="left:347.16px;top:28.6px;width:.7px;height:2px;background:#cdcdcd"></div><div class="abs" style="left:352.09px;top:28.6px;width:.7px;height:2px;background:#cdcdcd"></div><div class="abs" style="left:357.03px;top:26.7px;width:.7px;height:5.8px;background:#b4b4b4"></div><div class="abs" style="left:361.96px;top:28.6px;width:.7px;height:2px;background:#cdcdcd"></div><div class="abs" style="left:366.89px;top:28.6px;width:.7px;height:2px;background:#cdcdcd"></div><div class="abs" style="left:371.82px;top:28.6px;width:.7px;height:2px;background:#cdcdcd"></div><div class="t" style="left:367.05px;top:26.2px;width:20px;text-align:center;font-size:7.2px;font-weight:700;color:#555">9</div><div class="abs" style="left:381.68px;top:28.6px;width:.7px;height:2px;background:#cdcdcd"></div><div class="abs" style="left:386.61px;top:28.6px;width:.7px;height:2px;background:#cdcdcd"></div><div class="abs" style="left:391.54px;top:28.6px;width:.7px;height:2px;background:#cdcdcd"></div><div class="abs" style="left:396.48px;top:26.7px;width:.7px;height:5.8px;background:#b4b4b4"></div><div class="abs" style="left:401.41px;top:28.6px;width:.7px;height:2px;background:#cdcdcd"></div><div class="abs" style="left:406.34px;top:28.6px;width:.7px;height:2px;background:#cdcdcd"></div><div class="abs" style="left:411.27px;top:28.6px;width:.7px;height:2px;background:#cdcdcd"></div><div class="t" style="left:406.5px;top:26.2px;width:20px;text-align:center;font-size:7.2px;font-weight:700;color:#555">10</div><div class="abs" style="left:421.13px;top:28.6px;width:.7px;height:2px;background:#cdcdcd"></div><div class="abs" style="left:426.06px;top:28.6px;width:.7px;height:2px;background:#cdcdcd"></div><div class="abs" style="left:430.99px;top:28.6px;width:.7px;height:2px;background:#cdcdcd"></div><div class="abs" style="left:435.93px;top:26.7px;width:.7px;height:5.8px;background:#b4b4b4"></div><div class="abs" style="left:440.86px;top:28.6px;width:.7px;height:2px;background:#cdcdcd"></div><div class="abs" style="left:445.79px;top:28.6px;width:.7px;height:2px;background:#cdcdcd"></div><div class="abs" style="left:450.72px;top:28.6px;width:.7px;height:2px;background:#cdcdcd"></div><div class="t" style="left:445.95px;top:26.2px;width:20px;text-align:center;font-size:7.2px;font-weight:700;color:#555">11</div><div class="abs" style="left:460.58px;top:28.6px;width:.7px;height:2px;background:#cdcdcd"></div><div class="abs" style="left:465.51px;top:28.6px;width:.7px;height:2px;background:#cdcdcd"></div><div class="abs" style="left:470.44px;top:28.6px;width:.7px;height:2px;background:#cdcdcd"></div><div class="abs" style="left:475.38px;top:26.7px;width:.7px;height:5.8px;background:#b4b4b4"></div><div class="abs" style="left:480.31px;top:28.6px;width:.7px;height:2px;background:#cdcdcd"></div><div class="abs" style="left:485.24px;top:28.6px;width:.7px;height:2px;background:#cdcdcd"></div><div class="abs" style="left:490.17px;top:28.6px;width:.7px;height:2px;background:#cdcdcd"></div><div class="t" style="left:485.4px;top:26.2px;width:20px;text-align:center;font-size:7.2px;font-weight:700;color:#555">12</div><div class="abs" style="left:500.03px;top:28.6px;width:.7px;height:2px;background:#cdcdcd"></div><div class="abs" style="left:504.96px;top:28.6px;width:.7px;height:2px;background:#cdcdcd"></div><div class="abs" style="left:509.89px;top:28.6px;width:.7px;height:2px;background:#cdcdcd"></div><div class="abs" style="left:514.83px;top:26.7px;width:.7px;height:5.8px;background:#b4b4b4"></div><div class="abs" style="left:519.76px;top:28.6px;width:.7px;height:2px;background:#cdcdcd"></div><div class="abs" style="left:524.69px;top:28.6px;width:.7px;height:2px;background:#cdcdcd"></div><div class="abs" style="left:529.62px;top:28.6px;width:.7px;height:2px;background:#cdcdcd"></div><div class="t" style="left:524.85px;top:26.2px;width:20px;text-align:center;font-size:7.2px;font-weight:700;color:#555">13</div><div class="abs" style="left:539.48px;top:28.6px;width:.7px;height:2px;background:#cdcdcd"></div><div class="abs" style="left:544.41px;top:28.6px;width:.7px;height:2px;background:#cdcdcd"></div>
<div class="abs" style="left:0;top:34px;width:559px;height:1px;background:rgba(226,226,232,.5)"></div><div class="abs" style="left:24.3px;top:34px;width:522.7px;height:1px;background:rgba(255,255,255,.55)"></div>
<div class="abs" style="left:0;top:34.4px;width:10px;height:427px;background:#e6e6ec"></div>
<div class="abs" style="left:0;top:101.3px;width:10px;height:296.9px;background:#fff"></div>
<div class="abs" style="left:4.2px;top:106.83px;width:2px;height:.7px;background:#cdcdcd"></div><div class="abs" style="left:4.2px;top:111.76px;width:2px;height:.7px;background:#cdcdcd"></div><div class="abs" style="left:4.2px;top:116.69px;width:2px;height:.7px;background:#cdcdcd"></div><div class="abs" style="left:2.3px;top:121.62px;width:5.8px;height:.7px;background:#b4b4b4"></div><div class="abs" style="left:4.2px;top:126.56px;width:2px;height:.7px;background:#cdcdcd"></div><div class="abs" style="left:4.2px;top:131.49px;width:2px;height:.7px;background:#cdcdcd"></div><div class="abs" style="left:4.2px;top:136.42px;width:2px;height:.7px;background:#cdcdcd"></div><div class="t" style="left:-5px;top:138.15px;width:20px;text-align:center;font-size:7px;font-weight:700;color:#555;transform:rotate(-90deg)">1</div><div class="abs" style="left:4.2px;top:146.28px;width:2px;height:.7px;background:#cdcdcd"></div><div class="abs" style="left:4.2px;top:151.21px;width:2px;height:.7px;background:#cdcdcd"></div><div class="abs" style="left:4.2px;top:156.14px;width:2px;height:.7px;background:#cdcdcd"></div><div class="abs" style="left:2.3px;top:161.07px;width:5.8px;height:.7px;background:#b4b4b4"></div><div class="abs" style="left:4.2px;top:166.01px;width:2px;height:.7px;background:#cdcdcd"></div><div class="abs" style="left:4.2px;top:170.94px;width:2px;height:.7px;background:#cdcdcd"></div><div class="abs" style="left:4.2px;top:175.87px;width:2px;height:.7px;background:#cdcdcd"></div><div class="t" style="left:-5px;top:177.6px;width:20px;text-align:center;font-size:7px;font-weight:700;color:#555;transform:rotate(-90deg)">2</div><div class="abs" style="left:4.2px;top:185.73px;width:2px;height:.7px;background:#cdcdcd"></div><div class="abs" style="left:4.2px;top:190.66px;width:2px;height:.7px;background:#cdcdcd"></div><div class="abs" style="left:4.2px;top:195.59px;width:2px;height:.7px;background:#cdcdcd"></div><div class="abs" style="left:2.3px;top:200.53px;width:5.8px;height:.7px;background:#b4b4b4"></div><div class="abs" style="left:4.2px;top:205.46px;width:2px;height:.7px;background:#cdcdcd"></div><div class="abs" style="left:4.2px;top:210.39px;width:2px;height:.7px;background:#cdcdcd"></div><div class="abs" style="left:4.2px;top:215.32px;width:2px;height:.7px;background:#cdcdcd"></div><div class="t" style="left:-5px;top:217.05px;width:20px;text-align:center;font-size:7px;font-weight:700;color:#555;transform:rotate(-90deg)">3</div><div class="abs" style="left:4.2px;top:225.18px;width:2px;height:.7px;background:#cdcdcd"></div><div class="abs" style="left:4.2px;top:230.11px;width:2px;height:.7px;background:#cdcdcd"></div><div class="abs" style="left:4.2px;top:235.04px;width:2px;height:.7px;background:#cdcdcd"></div><div class="abs" style="left:2.3px;top:239.97px;width:5.8px;height:.7px;background:#b4b4b4"></div><div class="abs" style="left:4.2px;top:244.91px;width:2px;height:.7px;background:#cdcdcd"></div><div class="abs" style="left:4.2px;top:249.84px;width:2px;height:.7px;background:#cdcdcd"></div><div class="abs" style="left:4.2px;top:254.77px;width:2px;height:.7px;background:#cdcdcd"></div><div class="t" style="left:-5px;top:256.5px;width:20px;text-align:center;font-size:7px;font-weight:700;color:#555;transform:rotate(-90deg)">4</div><div class="abs" style="left:4.2px;top:264.63px;width:2px;height:.7px;background:#cdcdcd"></div><div class="abs" style="left:4.2px;top:269.56px;width:2px;height:.7px;background:#cdcdcd"></div><div class="abs" style="left:4.2px;top:274.49px;width:2px;height:.7px;background:#cdcdcd"></div><div class="abs" style="left:2.3px;top:279.43px;width:5.8px;height:.7px;background:#b4b4b4"></div><div class="abs" style="left:4.2px;top:284.36px;width:2px;height:.7px;background:#cdcdcd"></div><div class="abs" style="left:4.2px;top:289.29px;width:2px;height:.7px;background:#cdcdcd"></div><div class="abs" style="left:4.2px;top:294.22px;width:2px;height:.7px;background:#cdcdcd"></div><div class="t" style="left:-5px;top:295.95px;width:20px;text-align:center;font-size:7px;font-weight:700;color:#555;transform:rotate(-90deg)">5</div><div class="abs" style="left:4.2px;top:304.08px;width:2px;height:.7px;background:#cdcdcd"></div><div class="abs" style="left:4.2px;top:309.01px;width:2px;height:.7px;background:#cdcdcd"></div><div class="abs" style="left:4.2px;top:313.94px;width:2px;height:.7px;background:#cdcdcd"></div><div class="abs" style="left:2.3px;top:318.88px;width:5.8px;height:.7px;background:#b4b4b4"></div><div class="abs" style="left:4.2px;top:323.81px;width:2px;height:.7px;background:#cdcdcd"></div><div class="abs" style="left:4.2px;top:328.74px;width:2px;height:.7px;background:#cdcdcd"></div><div class="abs" style="left:4.2px;top:333.67px;width:2px;height:.7px;background:#cdcdcd"></div><div class="t" style="left:-5px;top:335.4px;width:20px;text-align:center;font-size:7px;font-weight:700;color:#555;transform:rotate(-90deg)">6</div><div class="abs" style="left:4.2px;top:343.53px;width:2px;height:.7px;background:#cdcdcd"></div><div class="abs" style="left:4.2px;top:348.46px;width:2px;height:.7px;background:#cdcdcd"></div><div class="abs" style="left:4.2px;top:353.39px;width:2px;height:.7px;background:#cdcdcd"></div><div class="abs" style="left:2.3px;top:358.33px;width:5.8px;height:.7px;background:#b4b4b4"></div><div class="abs" style="left:4.2px;top:363.26px;width:2px;height:.7px;background:#cdcdcd"></div><div class="abs" style="left:4.2px;top:368.19px;width:2px;height:.7px;background:#cdcdcd"></div><div class="abs" style="left:4.2px;top:373.12px;width:2px;height:.7px;background:#cdcdcd"></div><div class="t" style="left:-5px;top:374.85px;width:20px;text-align:center;font-size:7px;font-weight:700;color:#555;transform:rotate(-90deg)">7</div><div class="abs" style="left:4.2px;top:382.98px;width:2px;height:.7px;background:#cdcdcd"></div><div class="abs" style="left:4.2px;top:387.91px;width:2px;height:.7px;background:#cdcdcd"></div><div class="abs" style="left:4.2px;top:392.84px;width:2px;height:.7px;background:#cdcdcd"></div><div class="abs" style="left:2.3px;top:397.78px;width:5.8px;height:.7px;background:#b4b4b4"></div>
<div id="slide">
<div class="t" style="left:40.8px;top:32.9px;font-size:24px;color:#454545">Click to edit master title style</div>
<div class="abs" style="left:484px;top:11.2px;width:25.5px;height:25.5px;border-radius:50%;background:#d9d9d9"></div><div class="t" style="left:495px;top:21.5px;font-size:5px;color:#f4f4f4;font-style:italic">#</div>
<div class="t" style="left:45.5px;top:88.1px;font-size:14.8px;color:#666">&bull;</div><div class="t" style="left:54px;top:88.1px;font-size:14.8px;color:#666;letter-spacing:-0.05px">First level</div>
<div class="t" style="left:59.8px;top:108.6px;font-size:11.5px;color:#666">&bull;</div><div class="t" style="left:67px;top:107.7px;font-size:12.8px;color:#666;letter-spacing:-0.3px;transform:scaleY(1.03);transform-origin:0 86%">Second level</div>
<div class="t" style="left:73.5px;top:124.7px;font-size:9px;color:#666">&bull;</div><div class="t" style="left:80.3px;top:124px;font-size:10.6px;color:#666;letter-spacing:-0.12px;transform:scaleY(1.06);transform-origin:0 86%">Third level</div>
<div class="t" style="left:87px;top:138.8px;font-size:8.5px;color:#666">&bull;</div><div class="t" style="left:93.3px;top:138.4px;font-size:9.7px;color:#666;letter-spacing:-0.05px;transform:scaleY(1.09);transform-origin:0 86%">Fourth level</div>
<div class="t" style="left:99.9px;top:152.2px;font-size:8.5px;color:#666">&bull;</div><div class="t" style="left:106.2px;top:151.8px;font-size:9.7px;color:#666;letter-spacing:-0.05px;transform:scaleY(1.09);transform-origin:0 86%">Fifth level</div>
<div class="t" style="left:113px;top:165.8px;font-size:8.5px;color:#666">&bull;</div><div class="t" style="left:119.3px;top:165.4px;font-size:9.7px;color:#666;letter-spacing:-0.19px;transform:scaleY(1.09);transform-origin:0 86%">Sixth level</div>
<div class="t" style="left:126.3px;top:179.3px;font-size:8.5px;color:#666">&bull;</div><div class="t" style="left:132.6px;top:178.9px;font-size:9.7px;color:#666;letter-spacing:-0.2px;transform:scaleY(1.09);transform-origin:0 86%">Seventh level</div>
<div class="t" style="left:139.3px;top:192.9px;font-size:8.5px;color:#666">&bull;</div><div class="t" style="left:145.6px;top:192.5px;font-size:9.7px;color:#666;letter-spacing:-0.14px;transform:scaleY(1.09);transform-origin:0 86%">Eighth level</div>
<div class="t" style="left:152px;top:206.5px;font-size:8.5px;color:#666">&bull;</div><div class="t" style="left:158.3px;top:206.1px;font-size:9.7px;color:#666;letter-spacing:0.08px;transform:scaleY(1.09);transform-origin:0 86%">Ninth level</div>
<div class="t" style="left:41px;top:280.6px;font-size:6.4px;color:#b9b9b9">Unsupported placeholder</div>
<div class="t" style="left:227px;top:280.6px;font-size:6.4px;color:#b9b9b9">Unsupported placeholder</div>
<div class="t" style="left:481.5px;top:280.2px;font-size:5px;color:#999">#</div>
</div>
</div>
<!-- ===== SIDE PANEL ===== -->
<div id="side"></div>
<svg class="abs" style="left:827.5px;top:56.5px" width="11.5" height="11.5" viewBox="0 0 23 23"><rect x="0" y="0" width="23" height="23" rx="2" fill="#4a7fdc"/><rect x="0" y="0" width="23" height="5" rx="2" fill="#3b6fd0"/><text x="11.5" y="18.5" font-size="13" font-family="Liberation Sans" font-weight="700" fill="#dbe7fb" text-anchor="middle">31</text></svg>
<svg class="abs" style="left:827.5px;top:94.5px" width="11" height="11.5" viewBox="0 0 22 23"><path d="M2 0h18a2 2 0 0 1 2 2v13l-8 8H2a2 2 0 0 1-2-2V2a2 2 0 0 1 2-2z" fill="#f7bc23"/><path d="M14 23v-6a2 2 0 0 1 2-2h6z" fill="#fde293"/><path d="M8 7.5a3.2 3.2 0 1 1 5 2.7v2.3H9v-2.3A3.2 3.2 0 0 1 8 7.5z" fill="#fff" opacity=".85"/></svg>
<svg class="abs" style="left:827px;top:133px" width="12" height="12" viewBox="0 0 24 24"><circle cx="12" cy="12" r="12" fill="#2c78e4"/><path d="M6.5 12.5l3.5 3.5 7.5-8" fill="none" stroke="#fff" stroke-width="3" stroke-linecap="round" stroke-linejoin="round"/></svg>
<svg class="abs" style="left:830px;top:508.5px" width="6" height="9" viewBox="0 0 12 18"><path d="M2.5 2l7 7-7 7" fill="none" stroke="#555" stroke-width="2.6"/></svg>
</div>
</body>
</html>
